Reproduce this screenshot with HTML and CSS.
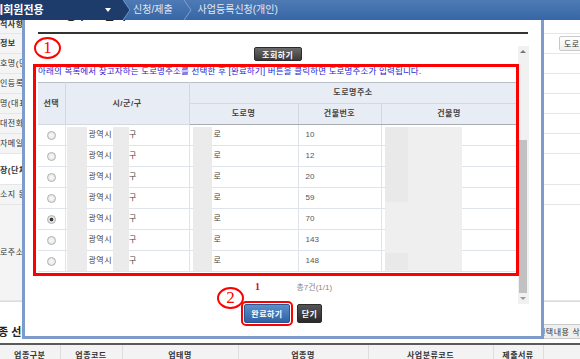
FILE: index.html
```html
<!DOCTYPE html>
<html>
<head>
  <meta charset="UTF-8">
  <title>사업등록신청(개인)</title>
  <link rel="stylesheet" href="styles.css">
</head>
<body>
  <div class="topbar">
    <div class="menu"><span class="menu-name">단체회원전용</span><span class="caret"></span></div>
    <svg class="sep" width="8" height="20" viewBox="0 0 8 20"><polygon points="0,0 7,10 0,20" fill="#1d3c6c"/><polyline points="0,0 7,10 0,20" fill="none" stroke="#6f93c4" stroke-width="1"/></svg>
    <span class="crumb">신청/제출</span>
    <svg class="sep" width="8" height="20" viewBox="0 0 8 20"><polyline points="0,0 7,10 0,20" fill="none" stroke="#7ea0cd" stroke-width="1"/></svg>
    <span class="crumb">사업등록신청(개인)</span>
  </div>

  <div class="form">
    <div class="row first"><div class="label bold">적사항</div><div class="value"></div></div>
    <div class="row"><div class="label bold">정보</div><div class="value"><button class="btn-light find">도로명주소 검색</button></div></div>
    <div class="row"><div class="label">호명(단체명)</div><div class="value"></div></div>
    <div class="row"><div class="label">인등록번호</div><div class="value"></div></div>
    <div class="row"><div class="label">명(대표자)</div><div class="value"></div></div>
    <div class="row"><div class="label">대전화번호</div><div class="value"></div></div>
    <div class="row"><div class="label">자메일주소</div><div class="value"></div></div>
    <div class="row heading"><div class="label bold">장(단체)정보</div><div class="value"></div></div>
    <div class="row"><div class="label">소지 동일여부</div><div class="value"></div></div>
    <div class="row tall"><div class="label">로주소</div><div class="value"></div></div>
  </div>

  <div class="section">
    <h3 class="section-title">업종 선택</h3>
    <button class="btn-light remove">선택내용 삭제</button>
  </div>
  <table class="biz">
    <tr>
      <th class="b1">업종구분</th>
      <th class="b2">업종코드</th>
      <th class="b3">업태명</th>
      <th class="b4">업종명</th>
      <th class="b5">사업분류코드</th>
      <th class="b6">제출서류</th>
      <th></th>
    </tr>
  </table>

  <div class="popup">
    <h2 class="pop-title">도로명주소 검색</h2>
    <div class="pop-rule"></div>
    <div class="scroll">
      <div class="scroll-content">
        <div class="search-row"><button class="btn-dark search">조회하기</button></div>
        <p class="notice">아래의 목록에서 찾고자하는 도로명주소를 선택한 후 [완료하기] 버튼을 클릭하면 도로명주소가 입력됩니다.</p>
        <div class="addr-wrap">
          <table class="addr">
            <colgroup>
              <col class="c-pick"><col class="c-sgg"><col class="c-road"><col class="c-num"><col class="c-name">
            </colgroup>
            <thead>
              <tr class="h1"><th rowspan="2">선택</th><th rowspan="2">시/군/구</th><th colspan="3">도로명주소</th></tr>
              <tr class="h2"><th>도로명</th><th>건물번호</th><th>건물명</th></tr>
            </thead>
            <tbody>
              <tr><td class="pick"><input type="radio" name="addr"></td><td class="sgg">광역시<span class="gu">구</span></td><td class="road">로</td><td class="num">10</td><td></td></tr>
              <tr><td class="pick"><input type="radio" name="addr"></td><td class="sgg">광역시<span class="gu">구</span></td><td class="road">로</td><td class="num">12</td><td></td></tr>
              <tr><td class="pick"><input type="radio" name="addr"></td><td class="sgg">광역시<span class="gu">구</span></td><td class="road">로</td><td class="num">20</td><td></td></tr>
              <tr><td class="pick"><input type="radio" name="addr"></td><td class="sgg">광역시<span class="gu">구</span></td><td class="road">로</td><td class="num">59</td><td></td></tr>
              <tr><td class="pick"><input type="radio" name="addr" checked></td><td class="sgg">광역시<span class="gu">구</span></td><td class="road">로</td><td class="num">70</td><td></td></tr>
              <tr><td class="pick"><input type="radio" name="addr"></td><td class="sgg">광역시<span class="gu">구</span></td><td class="road">로</td><td class="num">143</td><td></td></tr>
              <tr><td class="pick"><input type="radio" name="addr"></td><td class="sgg">광역시<span class="gu">구</span></td><td class="road">로</td><td class="num">148</td><td></td></tr>
            </tbody>
          </table>
          <!-- blurred-out parts of the address -->
          <div class="mask m1"></div>
          <div class="mask m2"></div>
          <div class="mask m3"></div>
          <div class="mask m4"></div>
          <div class="mask m5"></div>
          <div class="mask m6"></div>
        </div>
        <div class="pager"><a class="page-on">1</a><span class="total">총7건(1/1)</span></div>
      </div>
      <div class="scrollbar">
        <span class="arrow up"></span>
        <span class="track"></span>
        <span class="thumb"></span>
        <span class="arrow down"></span>
      </div>
    </div>
    <div class="actions">
      <button class="btn-blue done">완료하기</button>
      <button class="btn-dark close">닫기</button>
    </div>
    <!-- annotations -->
    <div class="mark-box"></div>
    <span class="mark mark-1">1</span>
    <span class="mark mark-2">2</span>
  </div>
</body>
</html>
```

FILE: styles.css
```css
* {
  box-sizing: border-box;
}
body {
  margin: 0;
  width: 580px;
  height: 359px;
  overflow: hidden;
  position: relative;
  background: #fff;
  color: #444;
  font-family: "Liberation Sans", "Noto Sans CJK KR", sans-serif;
  font-size: 8px;
  letter-spacing: 0.5px;
}
button {
  font-family: inherit;
  letter-spacing: inherit;
  cursor: pointer;
}

/* top navigation */
.topbar {
  position: relative;
  z-index: 2;
  display: flex;
  height: 20px;
  background: linear-gradient(#4e7bb6, #3766a4);
  color: #e2e9f4;
  font-size: 10px;
  line-height: 20px;
  letter-spacing: 0;
}
.menu {
  display: flex;
  align-items: center;
  width: 123px;
  overflow: hidden;
  background: #1d3c6c;
  color: #fff;
  font-size: 11px;
  font-weight: bold;
  white-space: nowrap;
}
.menu-name {
  margin-left: -17px;
}
.caret {
  margin-left: auto;
  margin-right: 12px;
  border-left: 3px solid transparent;
  border-right: 3px solid transparent;
  border-top: 4px solid #fff;
}
.sep {
  flex: none;
}
.crumb {
  padding: 0 11px 0 2px;
}
.crumb:last-child {
  padding-left: 6px;
}

/* form behind the popup */
.form {
  border-bottom: 1px solid #dcdcdc;
}
.row {
  display: flex;
  height: 20px;
  border-bottom: 1px solid #e6e6e6;
}
.row.first {
  height: 14px;
}
.row.heading {
  height: 31px;
  padding-top: 8px;
}
.row.tall {
  height: 96px;
}
.label {
  flex: none;
  width: 22px;
  overflow: hidden;
  white-space: nowrap;
  background: #f4f4f4;
  line-height: 19px;
  color: #333;
}
.row.first .label {
  line-height: 10px;
}
.row.heading .label {
  background: #fff;
  line-height: 18px;
}
.row.tall .label {
  line-height: 95px;
}
.bold {
  font-weight: bold;
}
.value {
  flex: 1;
  display: flex;
  align-items: center;
}
.btn-light {
  height: 15px;
  padding: 0 4px;
  border: 1px solid #c9c9c9;
  border-radius: 2px;
  background: linear-gradient(#fff, #eee);
  color: #333;
  font-size: 8px;
  white-space: nowrap;
}
.find {
  margin-left: 537px;
}

.section {
  display: flex;
  align-items: flex-end;
  height: 41px;
  padding-bottom: 4px;
}
.section-title {
  flex: none;
  width: 545px;
  margin: 0 0 0 -12px;
  font-size: 11px;
  line-height: 14px;
  letter-spacing: 0;
  color: #222;
}
.remove {
  flex: none;
  background: #efefef;
}
.biz {
  width: 620px;
  border-collapse: collapse;
  border-top: 2px solid #5a5a5a;
}
.biz th {
  height: 20px;
  padding: 0;
  border-right: 1px solid #ddd;
  background: #f3f3f3;
  font-size: 8px;
  color: #333;
}
.b1 { width: 60px; }
.b2 { width: 62px; }
.b3 { width: 116px; }
.b4 { width: 130px; }
.b5 { width: 125px; }
.b6 { width: 50px; }

/* popup */
.popup {
  position: absolute;
  top: 0;
  left: 22px;
  z-index: 1;
  width: 522px;
  height: 339px;
  border: 3px solid #7d9ccb;
  border-top: 0;
  background: #fff;
}
.pop-title {
  margin: 0;
  padding: 9px 0 0 17px;
  height: 23px;
  font-size: 12px;
  line-height: 14px;
  color: #222;
}
.pop-rule {
  height: 2px;
  margin: 9px 13px 0;
  background: #333;
}
.scroll {
  display: flex;
  height: 258px;
  margin: 12px 13px 0 5px;
}
.scroll-content {
  flex: 1;
  padding-left: 8px;
}
.search-row {
  padding-top: 1px;
  text-align: center;
}
.btn-dark {
  height: 14px;
  padding: 0;
  border: 1px solid #2b2b2b;
  border-radius: 2px;
  background: linear-gradient(#6b6b6b, #3a3a3a);
  color: #fff;
  font-size: 8px;
  font-weight: bold;
}
.search {
  width: 48px;
  vertical-align: top;
}
.notice {
  margin: 5px 0 0;
  font-size: 8.5px;
  line-height: 10px;
  letter-spacing: 0.15px;
  color: #2424d6;
  white-space: nowrap;
}

.addr-wrap {
  position: relative;
  margin-top: 6px;
}
.addr {
  width: 479px;
  table-layout: fixed;
  border-collapse: collapse;
  border-top: 1px solid #b8bec8;
}
.c-pick { width: 27px; }
.c-sgg { width: 124px; }
.c-road { width: 109px; }
.c-num { width: 83px; }
.c-name { width: 136px; }
.addr th {
  padding: 0;
  background: #e8ecf5;
  border: 1px solid #d3d9e3;
  border-top: 0;
  font-weight: bold;
  color: #444;
  line-height: 10px;
}
.addr tr.h1 th {
  height: 21px;
}
.addr tr.h2 th {
  height: 21px;
  border-bottom: 1px solid #a8acb3;
}
.addr td {
  height: 21px;
  padding: 0;
  border: 1px solid #dfe4ec;
  border-top: 0;
  line-height: 10px;
  color: #444;
  white-space: nowrap;
}
.addr th:first-child,
.addr td:first-child {
  border-left: 0;
}
.addr td.pick {
  text-align: center;
}
.pick input {
  appearance: none;
  display: block;
  width: 9px;
  height: 9px;
  margin: 0 auto;
  border: 1px solid #b3b3b3;
  border-radius: 50%;
  background: radial-gradient(#fafafa, #dedede);
}
.pick input:checked {
  background: radial-gradient(#3a3a3a 30%, #e6e6e6 45%, #d6d6d6);
}
.addr td.sgg {
  padding-left: 23px;
}
.gu {
  margin-left: 17px;
}
.addr td.road {
  padding-left: 24px;
}
.addr td.num {
  padding-left: 7px;
  color: #555;
  letter-spacing: 0;
}
.mask {
  position: absolute;
  top: 45px;
  height: 144px;
  background: #ebebeb;
}
.m1 { left: 29px; width: 20px; }
.m2 { left: 75px; width: 16px; }
.m3 { left: 155px; width: 19px; }
.m4 { left: 347px; width: 77px; background: #efefef; }
.m5 { left: 347px; width: 23px; height: 75px; background: #e8e9e8; }
.m6 { left: 347px; top: 171px; width: 23px; height: 17px; background: #e8e9e8; }

.pager {
  display: flex;
  align-items: baseline;
  margin-top: 10px;
  padding-left: 217px;
  line-height: 10px;
}
.page-on {
  color: #d01010;
  font-family: "Liberation Serif", serif;
  font-size: 10px;
  font-weight: bold;
}
.total {
  margin-left: 36px;
  color: #888;
  font-size: 8px;
  letter-spacing: 0;
}

.scrollbar {
  flex: none;
  display: flex;
  flex-direction: column;
  align-items: center;
  width: 11px;
  background: #f1f1f1;
}
.arrow {
  display: flex;
  align-items: center;
  justify-content: center;
  height: 11px;
}
.arrow::after {
  content: "";
  border-left: 3px solid transparent;
  border-right: 3px solid transparent;
}
.arrow.up::after {
  border-bottom: 3px solid #777;
}
.arrow.down::after {
  border-top: 3px solid #999;
}
.track {
  height: 83px;
}
.thumb {
  width: 8px;
  height: 153px;
  background: #c1c1c1;
}

.actions {
  display: flex;
  justify-content: center;
  gap: 7px;
}
.btn-blue {
  height: 19px;
  padding: 0;
  border: 1px solid #2a5590;
  border-radius: 2px;
  background: linear-gradient(#5d8fcb, #2f62a6);
  color: #fff;
  font-size: 8px;
  font-weight: bold;
}
.done {
  width: 46px;
  outline: 2px solid #f00;
  outline-offset: 1px;
}
.close {
  width: 25px;
  height: 19px;
  background: linear-gradient(#555, #2a2a2a);
}

/* red annotations on the screenshot */
.mark-box {
  position: absolute;
  top: 64px;
  left: 8px;
  width: 486px;
  height: 212px;
  border: 3px solid #f00;
  pointer-events: none;
}
.mark {
  position: absolute;
  width: 27px;
  height: 22px;
  border: 2px solid #f00;
  border-radius: 50%;
  color: #f00;
  font-family: "Liberation Serif", serif;
  font-size: 17px;
  line-height: 18px;
  text-align: center;
  letter-spacing: 0;
}
.mark-1 {
  top: 37px;
  left: 9px;
}
.mark-2 {
  top: 287px;
  left: 192px;
}
```
